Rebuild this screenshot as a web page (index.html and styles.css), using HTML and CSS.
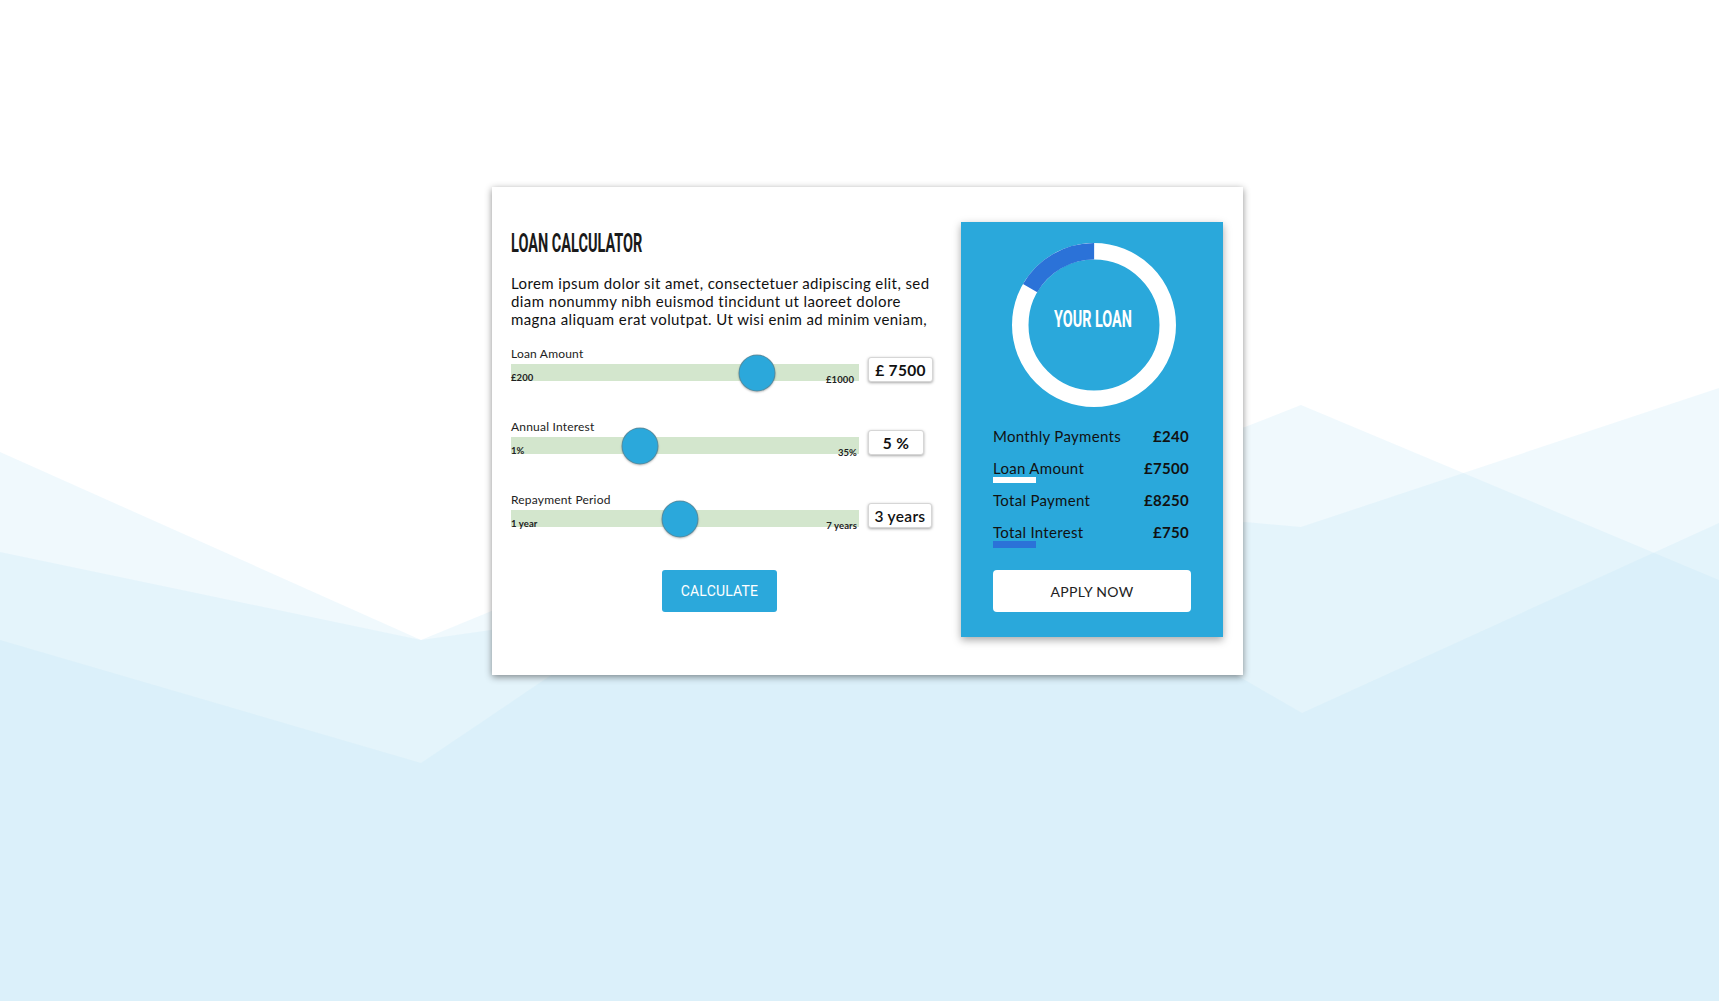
FILE: index.html
```html
<!DOCTYPE html>
<html lang="en">
<head>
<meta charset="utf-8">
<title>Loan Calculator</title>
<link rel="stylesheet" href="styles.css">
</head>
<body>
<svg class="bg" viewBox="0 0 1719 1001" preserveAspectRatio="none" aria-hidden="true">
  <polygon class="bg-layer" points="0,452 421,640 494,610 1245,427 1301,405 1719,580 1719,1001 0,1001"/>
  <polygon class="bg-layer" points="0,552 421,640 1245,522 1301,527 1719,388 1719,1001 0,1001"/>
  <polygon class="bg-layer" points="0,640 421,763 840,480 1245,680 1302,713 1719,523 1719,1001 0,1001"/>
</svg>
<main class="page">
  <section class="card">
    <div class="calc">
      <h1 class="title"><span class="condensed">LOAN CALCULATOR</span></h1>
      <p class="intro">Lorem ipsum dolor sit amet, consectetuer adipiscing elit, sed<br>diam nonummy nibh euismod tincidunt ut laoreet dolore<br>magna aliquam erat volutpat. Ut wisi enim ad minim veniam,</p>

      <div class="field">
        <div class="field-label">Loan Amount</div>
        <div class="field-row">
          <div class="track">
            <span class="range-min">£200</span>
            <span class="range-max range-max-a">£1000</span>
            <span class="thumb" style="left:70.7%"></span>
          </div>
          <div class="value value-amount">£ 7500</div>
        </div>
      </div>

      <div class="field">
        <div class="field-label">Annual Interest</div>
        <div class="field-row">
          <div class="track">
            <span class="range-min">1%</span>
            <span class="range-max">35%</span>
            <span class="thumb" style="left:37%"></span>
          </div>
          <div class="value value-rate">5 %</div>
        </div>
      </div>

      <div class="field">
        <div class="field-label">Repayment Period</div>
        <div class="field-row">
          <div class="track">
            <span class="range-min">1 year</span>
            <span class="range-max">7 years</span>
            <span class="thumb" style="left:48.6%"></span>
          </div>
          <div class="value value-period">3 years</div>
        </div>
      </div>

      <button class="btn-calc">CALCULATE</button>
    </div>

    <aside class="result">
      <div class="donut">
        <svg class="donut-svg" viewBox="0 0 164 164" width="164" height="164">
          <circle cx="82" cy="82" r="73.75" fill="none" stroke="#ffffff" stroke-width="16.5"/>
          <circle cx="82" cy="82" r="73.75" fill="none" stroke="#2b72d8" stroke-width="16.5" stroke-dasharray="77.2 463.4" transform="rotate(210 82 82)"/>
        </svg>
        <div class="donut-label"><span class="condensed">YOUR LOAN</span></div>
      </div>

      <div class="rows">
        <div class="row">
          <div class="row-line"><span>Monthly Payments</span><b>£240</b></div>
        </div>
        <div class="row">
          <div class="row-line"><span>Loan Amount</span><b>£7500</b></div>
          <div class="bar bar-white"></div>
        </div>
        <div class="row">
          <div class="row-line"><span>Total Payment</span><b>£8250</b></div>
        </div>
        <div class="row">
          <div class="row-line"><span>Total Interest</span><b>£750</b></div>
          <div class="bar bar-blue"></div>
        </div>
      </div>

      <button class="btn-apply">APPLY NOW</button>
    </aside>
  </section>
</main>
</body>
</html>
```

FILE: styles.css
```css
html, body {
  margin: 0;
  padding: 0;
}

body {
  width: 1719px;
  height: 1001px;
  background: #ffffff;
  font-family: Lato, "Noto Sans", sans-serif;
  color: #111;
  position: relative;
  overflow: hidden;
}

.bg {
  position: absolute;
  left: 0;
  top: 0;
  width: 1719px;
  height: 1001px;
  z-index: 0;
}

.bg-layer {
  fill: #c2e6f7;
  fill-opacity: 0.24;
}

.page {
  position: relative;
  z-index: 1;
  display: flex;
  justify-content: center;
  padding: 187px 0 0 16px;
}

.card {
  width: 751px;
  box-sizing: border-box;
  background: #fff;
  padding: 35px 20px 38px 19px;
  display: grid;
  grid-template-columns: 422px 262px;
  column-gap: 28px;
  box-shadow: 0 2px 7px rgba(0, 0, 0, 0.45);
}

.calc {
  padding-top: 8px;
  display: flex;
  flex-direction: column;
}

.condensed {
  display: inline-block;
  font-family: Roboto, "Liberation Sans", sans-serif;
  font-weight: 700;
  transform-origin: left center;
}

.title {
  margin: 0;
  font-size: 25px;
  line-height: 25px;
  height: 25px;
  color: #1a1a1a;
  white-space: nowrap;
}

.title .condensed {
  transform: scaleX(0.58);
}

.intro {
  margin: 19px 0 0;
  font-size: 15px;
  line-height: 18px;
  letter-spacing: 0.4px;
  color: #111;
  white-space: nowrap;
}

.field {
  margin-top: 38px;
}

.intro + .field {
  margin-top: 19px;
}

.field-label {
  font-size: 12px;
  line-height: 14px;
  letter-spacing: 0.2px;
  color: #222;
}

.field-row {
  display: flex;
  align-items: flex-start;
}

.track {
  position: relative;
  width: 348px;
  height: 17px;
  margin-top: 3px;
  background: #d3e6cd;
  display: flex;
  justify-content: space-between;
  align-items: flex-end;
  padding-right: 2px;
  box-sizing: border-box;
}

.range-min,
.range-max {
  font-size: 9.5px;
  line-height: 10px;
  font-weight: 700;
  letter-spacing: 0.1px;
  color: #222;
  margin-bottom: -2px;
}

.range-max {
  margin-bottom: -4px;
}

.range-max-a {
  margin-right: 3px;
}

.thumb {
  position: absolute;
  top: 50%;
  width: 37px;
  height: 37px;
  border-radius: 50%;
  background: #2ba8db;
  border: 1px solid rgba(110, 120, 120, 0.6);
  box-sizing: border-box;
  transform: translate(-50%, -50%);
  box-shadow: 0 1px 2px rgba(0, 0, 0, 0.25);
}

.value {
  margin-left: 9px;
  margin-top: -4px;
  height: 25px;
  box-sizing: border-box;
  border: 1px solid #d6d6d6;
  border-radius: 3px;
  box-shadow: 0 1px 3px rgba(0, 0, 0, 0.35);
  background: #fff;
  display: flex;
  align-items: center;
  justify-content: center;
  font-size: 15.5px;
  font-weight: 700;
  letter-spacing: 0.3px;
  color: #111;
}

.value-amount { width: 65px; }
.value-rate { width: 56px; }
.value-period { width: 64px; font-weight: 600; }

.btn-calc {
  align-self: flex-start;
  margin: 42px 0 0 151px;
  width: 115px;
  height: 42px;
  border: none;
  border-radius: 3px;
  background: #2ba8db;
  color: #fff;
  font-family: Roboto, "Liberation Sans", sans-serif;
  font-size: 14px;
  letter-spacing: 0.2px;
  padding: 0;
}

.result {
  background: #2aa8db;
  padding: 21px 32px 25px;
  display: flex;
  flex-direction: column;
  box-shadow: 0 3px 8px rgba(0, 0, 0, 0.35);
}

.donut {
  align-self: center;
  width: 164px;
  height: 164px;
  display: grid;
  margin-left: 3px;
}

.donut-svg,
.donut-label {
  grid-area: 1 / 1;
}

.donut-label {
  place-self: center;
  margin-bottom: 14px;
  width: 79px;
  height: 24px;
  font-size: 24px;
  line-height: 24px;
  color: #fff;
  white-space: nowrap;
}

.donut-label .condensed {
  transform: scaleX(0.6);
}

.rows {
  margin-top: 20px;
}

.row {
  height: 32px;
}

.row-line {
  display: flex;
  justify-content: space-between;
  font-size: 15px;
  line-height: 18px;
  letter-spacing: 0.3px;
  color: #111;
  padding-right: 2px;
}

.row-line b {
  font-weight: 700;
}

.bar {
  width: 43px;
  height: 6px;
}

.bar-white { background: #fff; }
.bar-blue { background: #2b72d8; height: 7px; }

.btn-apply {
  margin-top: 15px;
  height: 42px;
  border: none;
  border-radius: 4px;
  background: #fff;
  color: #222;
  font-family: Lato, "Noto Sans", sans-serif;
  font-size: 14px;
  letter-spacing: 0.3px;
  padding: 0;
}
```
